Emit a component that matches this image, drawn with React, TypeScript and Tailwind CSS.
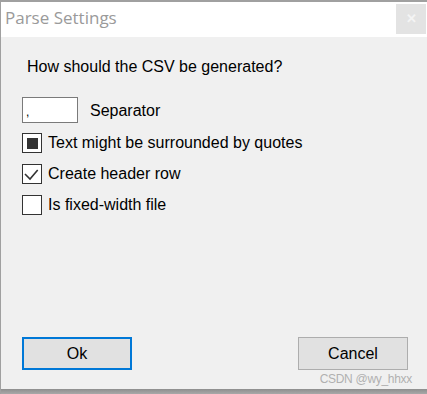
import React from 'react';

const FONT = { fontFamily: '"Liberation Sans", Arial, sans-serif' };

function CheckBox({ state }: { state: 'mixed' | 'checked' | 'off' }) {
  return (
    <span className="flex h-[20px] w-[20px] shrink-0 items-center justify-center border border-[#333333] bg-white">
      {state === 'mixed' && <span className="block h-[11px] w-[11px] bg-[#333333]" />}
      {state === 'checked' && (
        <svg width="18" height="18" viewBox="0 0 18 18" className="block">
          <path d="M2 9 L7 14 L14.7 5" fill="none" stroke="#333333" strokeWidth="1.6" />
        </svg>
      )}
    </span>
  );
}

function Option({ state, label }: { state: 'mixed' | 'checked' | 'off'; label: string }) {
  return (
    <label className="flex h-[20px] items-center gap-[6px]">
      <CheckBox state={state} />
      <span className="text-[16px] leading-[18px] text-black">{label}</span>
    </label>
  );
}

export default function App() {
  return (
    <div
      className="flex h-[394px] w-[427px] flex-col border-l border-t-2 border-[#a0a0a0] bg-[#f0f0f0]"
      style={FONT}
    >
      {/* title bar */}
      <div className="flex h-[35px] shrink-0 items-start justify-between bg-white">
        <span
          className="pl-[4px] pt-[5px] text-[17px] leading-[22px] text-[#9a9a9a]"
          style={{ fontFamily: '"Open Sans", "Noto Sans", sans-serif' }}
        >
          Parse Settings
        </span>
        <span className="mr-[1px] mt-[2px] flex h-[30px] w-[30px] items-center justify-center bg-[#e3e3e3] text-[13px] font-bold text-[#f4f4f4]">
          ✕
        </span>
      </div>

      {/* body */}
      <div className="flex flex-1 flex-col pl-[21px] pr-[19px]">
        <p className="mt-[21px] pl-[5px] text-[16px] leading-[18px] text-black">
          How should the CSV be generated?
        </p>

        <div className="mt-[21px] flex items-start gap-[12px]">
          <span className="flex h-[26px] w-[56px] items-end border border-[#7a7a7a] bg-white pb-[4px] pl-[3px] text-[12px] leading-[12px] text-black">
            ,
          </span>
          <span className="mt-[5px] text-[16px] leading-[18px] text-black">Separator</span>
        </div>

        <div className="mt-[10px] flex flex-col gap-[11px]">
          <Option state="mixed" label="Text might be surrounded by quotes" />
          <Option state="checked" label="Create header row" />
          <Option state="off" label="Is fixed-width file" />
        </div>

        <div className="mt-auto flex items-start justify-between pb-[3px]">
          <button
            type="button"
            className="h-[33px] w-[110px] border-2 border-[#0078d7] bg-[#e1e1e1] text-[16px] text-black"
          >
            Ok
          </button>
          <div className="flex flex-col items-end">
            <button
              type="button"
              className="h-[33px] w-[110px] border border-[#adadad] bg-[#e1e1e1] text-[16px] text-black"
            >
              Cancel
            </button>
            <span className="mr-[-4px] mt-[2px] text-[12px] leading-[14px] tracking-[-0.3px] text-[#b0b0b0]">
              CSDN @wy_hhxx
            </span>
          </div>
        </div>
      </div>

      {/* bottom shadow */}
      <div className="h-[5px] shrink-0 bg-gradient-to-b from-[#8e8e8e] to-[#a8a8a8]" />
    </div>
  );
}
